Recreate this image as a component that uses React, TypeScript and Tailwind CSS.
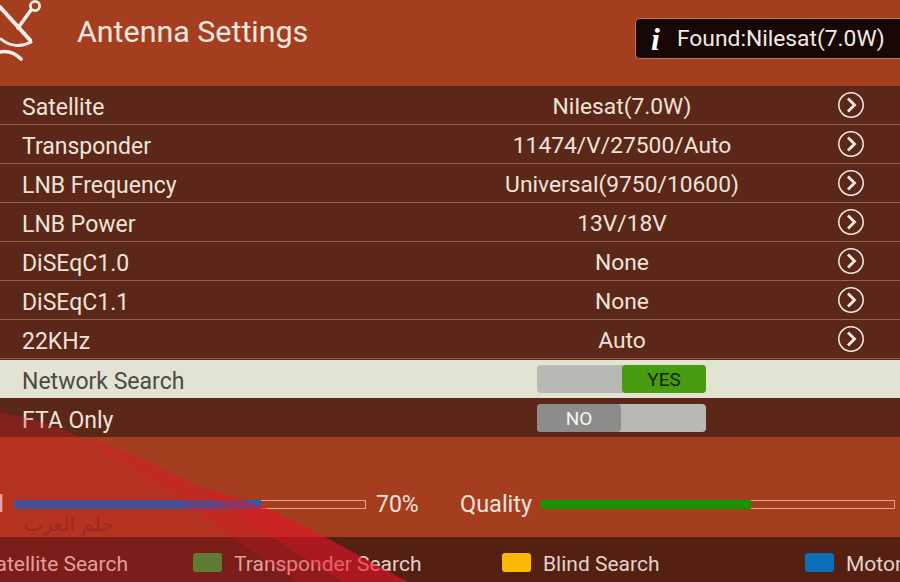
const rows = [
  ['Satellite', 'Nilesat(7.0W)'],
  ['Transponder', '11474/V/27500/Auto'],
  ['LNB Frequency', 'Universal(9750/10600)'],
  ['LNB Power', '13V/18V'],
  ['DiSEqC1.0', 'None'],
  ['DiSEqC1.1', 'None'],
  ['22KHz', 'Auto'],
]

const Chevron = () => (
  <svg width="28" height="28" viewBox="0 0 28 28" fill="none" stroke="#f3ece4" className="shrink-0">
    <circle cx="14" cy="14" r="12.2" strokeWidth="1.5" />
    <path d="M11 7.5 L17.5 14 L11 20.5" strokeWidth="2.8" />
  </svg>
)

const Row = ({ label, value }: { label: string; value: string }) => (
  <div className="flex h-[39px] items-center border-b border-[#93604a] pl-[22px] text-[#efe3da]">
    <span className="mt-[5px] w-[400px] text-[23px] leading-none">{label}</span>
    <span className="mt-[5px] w-[400px] text-center text-[22.8px] leading-none">{value}</span>
    <span className="ml-[15px]"><Chevron /></span>
  </div>
)

const Legend = ({ color, label, className }: { color: string; label: string; className: string }) => (
  <div className={`flex shrink-0 items-center gap-[12px] ${className}`}>
    <span className={`h-[19px] w-[29px] rounded-[3px] ${color}`} />
    <span className="mt-[4px] text-[21px] leading-none text-[#e3d3ca] whitespace-nowrap">{label}</span>
  </div>
)

export default function App() {
  return (
    <div className="relative h-[582px] w-[900px] overflow-hidden bg-[#a43e1f] font-['Roboto',sans-serif]">
      <header className="flex h-[86px] items-start justify-between">
        <div className="flex items-center">
          <svg width="60" height="62" viewBox="0 0 60 62" fill="none" stroke="#f6eee8" strokeLinecap="round" className="shrink-0">
            <circle cx="35" cy="6" r="4.6" strokeWidth="2.8" />
            <path d="M31 10 L18 28" strokeWidth="3.6" />
            <path d="M0 7 L30 40" strokeWidth="4" />
            <path d="M31 42 C22 47 10 47 1 39" strokeWidth="3" />
            <path d="M0 52 C9 50 16 54 21 59" strokeWidth="3.6" />
          </svg>
          <h1 className="ml-[17px] mt-[2px] text-[30.4px] leading-none text-[#f3e7e0]">Antenna Settings</h1>
        </div>
        <div className="mt-[18px] flex h-[41px] w-[265px] items-center rounded-l-[5px] border border-[#b9785f] border-r-0 bg-[#170805]">
          <span className="ml-[15px] w-[26px] font-['Liberation_Serif',serif] text-[32px] font-bold italic leading-none text-white">i</span>
          <span className="mt-[1px] text-[22.8px] leading-none text-[#f1e9e4] whitespace-nowrap">Found:Nilesat(7.0W)</span>
        </div>
      </header>

      <main className="bg-[#5b2718]">
        {rows.map(([label, value]) => (
          <Row key={label} label={label} value={value} />
        ))}
        <div className="flex h-[39px] items-center border-t border-[#5b2718] bg-[#e3e3d3] pl-[22px] text-[#4d4a42]">
          <span className="mt-[4px] w-[515px] text-[23px] leading-none">Network Search</span>
          <div className="flex h-[28px] w-[169px] justify-end rounded-[4px] bg-[#b8b9b4]">
            <span className="flex w-[84px] items-center justify-center rounded-[4px] bg-[#479c10] pt-[2px] text-[19px] text-[#12240a]">YES</span>
          </div>
        </div>
        <div className="flex h-[39px] items-center pl-[22px] text-[#efe3da]">
          <span className="mt-[5px] w-[515px] text-[23px] leading-none">FTA Only</span>
          <div className="flex h-[28px] w-[169px] rounded-[4px] bg-[#b8b9b4]">
            <span className="flex w-[84px] items-center justify-center rounded-[4px] bg-[#8c8c8a] pt-[3px] text-[19px] text-[#f5f5f2]">NO</span>
          </div>
        </div>
      </main>

      <section className="flex h-[100px] items-center pt-[34px] text-[#f1e3da]">
        <div className="mr-[10px] flex w-[4px] justify-end">
          <span className="mt-[1px] text-[23.5px] leading-none whitespace-nowrap">Signal</span>
        </div>
        <div className="h-[9px] w-[352px] border border-[#dba795]">
          <div className="-m-px h-[9px] w-[247px] bg-[#0c68bb]" />
        </div>
        <span className="ml-[10px] mt-[1px] w-[84px] text-[23px] leading-none">70%</span>
        <span className="mt-[1px] w-[81px] text-[23.5px] leading-none">Quality</span>
        <div className="h-[9px] w-[354px] border border-[#dba795]">
          <div className="-m-px h-[9px] w-[210px] bg-[#169405]" />
        </div>
      </section>

      <footer className="flex h-[45px] items-center bg-[#532012] pt-[5px]">
        <div className="flex w-[128px] shrink-0 justify-end">
          <span className="mt-[4px] text-[21px] leading-none text-[#e3d3ca] whitespace-nowrap">Satellite Search</span>
        </div>
        <Legend color="bg-[#2ba23a] ml-[65px]" label="Transponder Search" className="w-[374px]" />
        <Legend color="bg-[#fbb905]" label="Blind Search" className="w-[303px]" />
        <Legend color="bg-[#0c70b9]" label="Motor" className="" />
      </footer>

      {/* watermark over the bottom left corner */}
      <svg width="900" height="582" viewBox="0 0 900 582" className="pointer-events-none absolute inset-0">
        <path d="M0 412 C30 418 60 427 80 437 L0 437 Z" fill="#e61428" fillOpacity="0.28" />
        <path d="M0 437 L80 437 C120 458 155 485 185 503 L230 537 L297 582 L0 582 Z" fill="#e61428" fillOpacity="0.28" />
        <path d="M80 437 C130 450 165 470 200 487 L220 503 L270 537 L343 582 L297 582 L230 537 L185 503 C155 485 120 458 80 437 Z" fill="#e61428" fillOpacity="0.42" />
        <path d="M200 487 L260 505 L327 538 L408 582 L343 582 L270 537 L220 503 Z" fill="#e61428" fillOpacity="0.6" />
      </svg>
      <span dir="rtl" className="pointer-events-none absolute left-[24px] top-[514px] font-['DejaVu_Sans',sans-serif] text-[20px] leading-none text-[#9c2a1f]">حلم العرب</span>
    </div>
  )
}
